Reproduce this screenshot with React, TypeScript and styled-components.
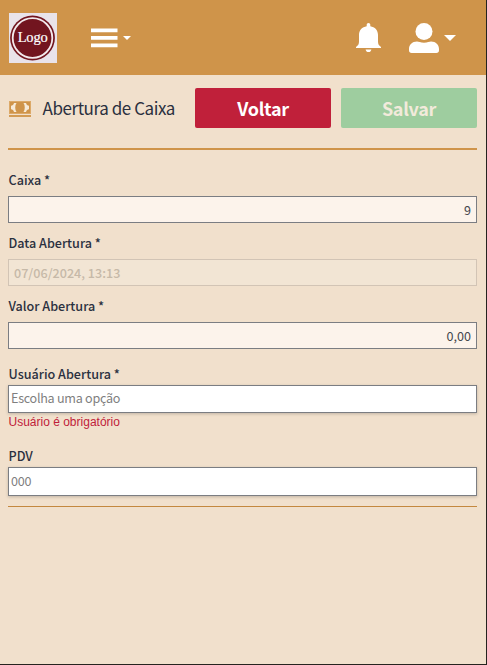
import React from "react";
import styled, { createGlobalStyle } from "styled-components";

const GlobalStyle = createGlobalStyle`
  *, *::before, *::after { box-sizing: border-box; }
  html, body { margin: 0; padding: 0; }
  body {
    background: #f1e0cc;
    color: #2b303f;
    font-family: "Source Sans Pro", "Noto Sans CJK SC", sans-serif;
    overflow: hidden;
  }
  svg { display: block; flex: none; }
`;

const Screen = styled.div`
  width: 100%;
  height: 665px;
  border-right: 1px solid #25231f;
  border-bottom: 1px solid #25231f;
`;

const TopBar = styled.header`
  height: 75px;
  display: flex;
  align-items: center;
  background: #cf944a;
  padding: 0 30px 0 9px;
  color: #fff;
`;

const LogoBox = styled.div`
  width: 48px;
  height: 50px;
  margin-top: 1px;
  background: #e9e3ea;
`;

const IconButton = styled.button<{ $gap?: number }>`
  display: flex;
  align-items: center;
  gap: ${({ $gap = 0 }) => $gap}px;
  padding: 0;
  border: 0;
  background: none;
  color: inherit;
`;

const MenuButton = styled(IconButton)`
  margin-left: 34px;
`;

const Actions = styled.div`
  display: flex;
  align-items: center;
  gap: 28px;
  margin-left: auto;
`;

const Caret = styled.span<{ $size: number }>`
  border-left: ${({ $size }) => $size}px solid transparent;
  border-right: ${({ $size }) => $size}px solid transparent;
  border-top: ${({ $size }) => $size}px solid currentColor;
`;

const Content = styled.main`
  padding: 13px 9px 0 8px;
`;

const TitleRow = styled.div`
  display: flex;
  align-items: center;
  height: 62px;
  padding: 0 0 20px 1px;
  border-bottom: 2px solid #cf944a;

  > svg { margin-top: 2px; }
`;

const Title = styled.h1`
  flex: 1;
  margin: 0 0 0 11.5px;
  font-size: 17px;
  letter-spacing: -0.43px;
  line-height: 24px;
  font-weight: 400;
  white-space: nowrap;
`;

const Button = styled.button<{ $tone: "danger" | "success" }>`
  flex: none;
  width: 136px;
  height: 40px;
  margin-left: 10px;
  padding: 0;
  border: 0;
  border-radius: 2px;
  font: 700 18px/40px "Source Sans Pro", "Noto Sans CJK SC", sans-serif;
  letter-spacing: -0.3px;
  color: ${({ $tone }) => ($tone === "danger" ? "#fff" : "#f2eadb")};
  background: ${({ $tone }) => ($tone === "danger" ? "#c0203a" : "#9ecd9f")};
`;

const Form = styled.form`
  display: flex;
  flex-direction: column;
  padding-bottom: 10px;
  border-bottom: 1px solid #c4883f;
`;

const Field = styled.div<{ $top: number; $gap: number }>`
  display: flex;
  flex-direction: column;
  gap: ${({ $gap }) => $gap}px;
  margin-top: ${({ $top }) => $top}px;
`;

const Label = styled.label`
  height: 20px;
  padding-left: 0.5px;
  font-size: 12.6px;
  line-height: 19.5px;
  font-weight: 500;
`;

const Input = styled.input<{ $kind: "numeric" | "locked" | "select"; $height?: number }>`
  width: 100%;
  height: ${({ $height = 27 }) => $height}px;
  border: 1px solid ${({ $kind }) => ($kind === "locked" ? "#d2c4b5" : "#7b7d82")};
  border-radius: 0;
  outline: 0;
  padding: ${({ $kind }) => ($kind === "select" ? "0 2px 3px" : "0 5px 1px")};
  background: ${({ $kind }) =>
    $kind === "select" ? "#fff" : $kind === "locked" ? "#f2e5d4" : "#fcf3eb"};
  color: ${({ $kind }) => ($kind === "locked" ? "#c6b9a8" : "#45464d")};
  text-align: ${({ $kind }) => ($kind === "numeric" ? "right" : "left")};
  font: ${({ $kind }) => ($kind === "locked" ? 500 : 400)} 12.6px/20px
    "Source Sans Pro", "Noto Sans CJK SC", sans-serif;
  letter-spacing: ${({ $kind }) => ($kind === "select" ? "-0.28px" : "normal")};
  box-shadow: ${({ $kind }) => ($kind === "select" ? "0 1px 3px rgba(0, 0, 0, 0.2)" : "none")};

  &::placeholder { color: #7f7f7f; opacity: 1; }
`;

const ErrorText = styled.div`
  height: 16px;
  padding-left: 0.5px;
  font: 12px/16px "Liberation Sans", Arial, sans-serif;
  color: #c0203a;
`;

const Logo = () => (
  <svg width="48" height="50" viewBox="0 0 48 50">
    <circle cx="23.5" cy="25" r="22.4" fill="#72151f" />
    <circle cx="23.5" cy="25" r="19.8" fill="none" stroke="#f3eaed" strokeWidth="1.8" />
    <text x="23.7" y="29" textAnchor="middle" fill="#fff" fontSize="14.5" fontFamily="Liberation Serif" textLength="30" stroke="#fff" strokeWidth=".2">
      Logo
    </text>
  </svg>
);

const MenuIcon = () => (
  <svg width="27" height="20" viewBox="0 0 27 20" fill="#fff">
    <path d="M0 .5h26.5v3.8H0zM0 8h26.5v3.8H0zM0 15.5h26.5v3.8H0z" />
  </svg>
);

const BellIcon = () => (
  <svg width="25" height="30" viewBox="0 0 25 30" fill="#fff">
    <path d="M12.5 0c1 0 1.8.8 1.8 1.8v1.5C18.9 4 22 7.300 22 12v6.500c0 2.500.8 4 3 5.500v1H0v-1c2.200-1.500 3-3 3-5.500V12c0-4.700 3.100-8 7.700-8.700V1.800C10.700.8 11.500 0 12.500 0z" />
    <path d="M9.600 26.400h5.800c-.3 1.600-1.400 2.600-2.900 2.600s-2.600-1-2.900-2.600z" />
  </svg>
);

const UserIcon = () => (
  <svg width="30" height="30" viewBox="0 0 30 30" fill="#fff">
    <circle cx="15" cy="8.500" r="8.500" />
    <path d="M8 18.500c1.500 0 3.500 1.200 7 1.200s5.500-1.200 7-1.200c4.800 0 8 3.200 8 7.500v1.300C30 29 29 30 27.300 30H2.700C1 30 0 29 0 27.300V26c0-4.300 3.200-7.500 8-7.500z" />
  </svg>
);

const MoneyIcon = () => (
  <svg width="22" height="16" viewBox="0 0 22 16">
    <path d="M0 0h22v13H0z" fill="#dca968" />
    <path d="M1 1h20v11H1z" fill="#cf944a" />
    <path d="M7.500 2H5C4.500 4 3.500 4.500 2 4.800v3.400c1.500.3 2.500.8 3 2.800h2.500C5.800 8.500 5.800 4.500 7.500 2zM14.500 2H17c.5 2 1.500 2.500 3 2.800v3.400c-1.500.3-2.500.8-3 2.800h-2.500c1.700-2.500 1.700-6.500 0-9z" fill="#f7ead7" />
    <path d="M0 14h22v2H0z" fill="#d39b54" />
  </svg>
);

export default function App() {
  return (
    <Screen>
      <GlobalStyle />
      <TopBar>
        <LogoBox><Logo /></LogoBox>
        <MenuButton type="button" aria-label="Menu" $gap={5}>
          <MenuIcon />
          <Caret $size={4} />
        </MenuButton>
        <Actions>
          <IconButton type="button" aria-label="Notificações"><BellIcon /></IconButton>
          <IconButton type="button" aria-label="Conta" $gap={5}>
            <UserIcon />
            <Caret $size={6} />
          </IconButton>
        </Actions>
      </TopBar>
      <Content>
        <TitleRow>
          <MoneyIcon />
          <Title>Abertura de Caixa</Title>
          <Button type="button" $tone="danger">Voltar</Button>
          <Button type="button" $tone="success" disabled>Salvar</Button>
        </TitleRow>
        <Form>
          <Field $top={20} $gap={6}>
            <Label htmlFor="caixa">Caixa *</Label>
            <Input id="caixa" $kind="numeric" defaultValue="9" />
          </Field>
          <Field $top={10} $gap={6}>
            <Label htmlFor="data">Data Abertura *</Label>
            <Input id="data" $kind="locked" defaultValue="07/06/2024, 13:13" disabled />
          </Field>
          <Field $top={10} $gap={6}>
            <Label htmlFor="valor">Valor Abertura *</Label>
            <Input id="valor" $kind="numeric" defaultValue="0,00" />
          </Field>
          <Field $top={15} $gap={1}>
            <Label htmlFor="usuario">Usuário Abertura *</Label>
            <Input id="usuario" $kind="select" $height={28} placeholder="Escolha uma opção" />
            <ErrorText>Usuário é obrigatório</ErrorText>
          </Field>
          <Field $top={16} $gap={1}>
            <Label htmlFor="pdv">PDV</Label>
            <Input id="pdv" $kind="select" $height={29} placeholder="000" />
          </Field>
        </Form>
      </Content>
    </Screen>
  );
}
